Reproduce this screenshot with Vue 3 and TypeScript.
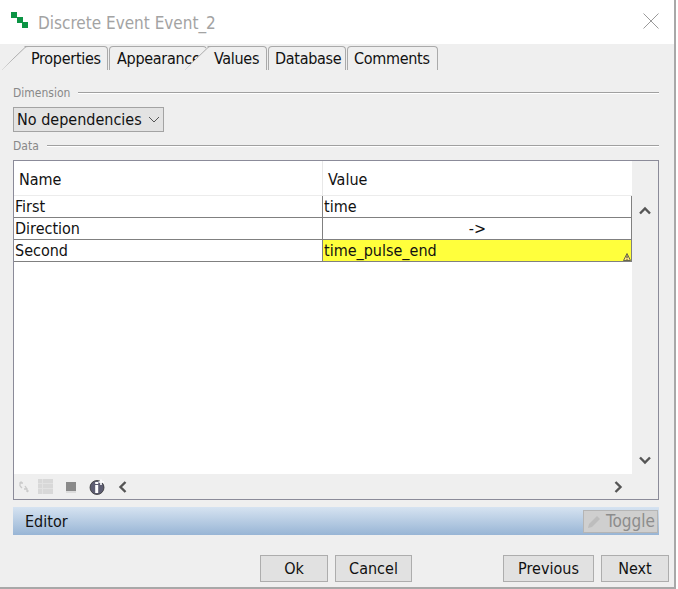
<template>
  <div class="dialog">
    <header class="titlebar">
      <svg class="logo" width="18" height="18" viewBox="0 0 18 18">
        <rect x="0" y="0" width="6" height="6" fill="#0b9444" />
        <rect x="6" y="5" width="6" height="6" fill="#0b9444" />
        <rect x="11" y="10" width="6" height="6" fill="#0b9444" />
      </svg>
      <span class="title">Discrete Event Event_2</span>
      <svg class="close" width="16" height="16" viewBox="0 0 16 16">
        <path d="M0.5 0.5L15.5 15.5M15.5 0.5L0.5 15.5" stroke="#9a9a9a" stroke-width="1" fill="none" />
      </svg>
    </header>

    <div class="body">
      <nav class="tabs">
        <div v-for="tab in tabs" :key="tab.label" class="tab" :class="{ slanted: tab.slanted }" :style="{ width: tab.width + 'px' }">
          <svg v-if="tab.slanted" class="slant" width="26" height="24" viewBox="0 0 26 24">
            <path d="M0 23.5L23 1.5Q24 .5 26 .5" stroke="#aaa" fill="none" />
          </svg>
          {{ tab.label }}
        </div>
      </nav>

      <div class="legend legend-first"><span>Dimension</span><i></i></div>
      <div class="select">
        <span>No dependencies</span>
        <svg width="12" height="7" viewBox="0 0 12 7">
          <path d="M1 1L6 6L11 1" stroke="#555" fill="none" />
        </svg>
      </div>

      <div class="legend legend-data"><span>Data</span><i></i></div>
      <section class="frame">
        <div class="frame-main">
          <div class="grid">
            <div class="head">
              <div class="head-cell">Name</div>
              <div class="head-cell">Value</div>
            </div>
            <div v-for="row in rows" :key="row.name" class="row">
              <div class="cell">{{ row.name }}</div>
              <div class="cell value" :class="{ center: row.center, warn: row.warn }">
                {{ row.value }}
                <svg v-if="row.warn" class="warn-icon" width="8" height="8" viewBox="0 0 8 8">
                  <path d="M4 .5L7.5 7.5H.5Z" fill="#ffe680" stroke="#444" stroke-width=".8" />
                  <path d="M4 2.5V5.2M4 6V6.8" stroke="#222" stroke-width=".9" />
                </svg>
              </div>
            </div>
          </div>
          <div class="vscroll">
            <svg width="12" height="9" viewBox="0 0 12 9"><path d="M1 7.5L6 2.5L11 7.5" stroke="#555" stroke-width="2.4" fill="none" /></svg>
            <svg width="12" height="9" viewBox="0 0 12 9"><path d="M1 1.5L6 6.5L11 1.5" stroke="#555" stroke-width="2.4" fill="none" /></svg>
          </div>
        </div>
        <div class="toolbar">
          <svg width="11" height="12" viewBox="0 0 11 12">
            <path d="M1 5V2H4M2.5 .5L1 2M8 11V8H5M9.5 9.5L8 11M1 5L3 7M8 8L6 5" stroke="#cacaca" stroke-width="1.3" fill="none" />
          </svg>
          <svg class="tool-table" width="15" height="15" viewBox="0 0 15 15">
            <rect width="15" height="15" fill="#d8d8d8" />
            <path d="M0 4.5H15M0 9.5H15M4.5 0V15" stroke="#e2e2e2" />
          </svg>
          <svg class="tool-square" width="10" height="11" viewBox="0 0 10 11">
            <rect width="10" height="9" fill="#8a8a8a" />
            <rect y="9" width="10" height="2" fill="#dcdcdc" />
          </svg>
          <svg class="tool-info" width="16" height="16" viewBox="0 0 16 16">
            <circle cx="8" cy="8.5" r="7" fill="#5d5d72" stroke="#333" stroke-width=".8" />
            <rect x="6.2" y="6" width="3" height="8" fill="#fff" />
            <rect x="6.2" y="3" width="3" height="2" fill="#fff" />
            <path d="M12 .5V6M9.5 3H15" stroke="#fff" stroke-width="1.6" />
          </svg>
          <svg class="tool-left" width="9" height="12" viewBox="0 0 9 12"><path d="M7.5 1L2.5 6L7.5 11" stroke="#555" stroke-width="2.4" fill="none" /></svg>
          <svg class="tool-right" width="9" height="12" viewBox="0 0 9 12"><path d="M1.5 1L6.5 6L1.5 11" stroke="#555" stroke-width="2.4" fill="none" /></svg>
        </div>
      </section>

      <div class="editor">
        <span>Editor</span>
        <div class="toggle">
          <svg width="15" height="15" viewBox="0 0 15 15">
            <path d="M1 14L2 10L10 2L13 5L5 13Z" fill="#bdbdbd" />
          </svg>
          Toggle
        </div>
      </div>

      <footer class="actions">
        <button class="btn ok">Ok</button>
        <button class="btn cancel">Cancel</button>
        <button class="btn previous">Previous</button>
        <button class="btn next">Next</button>
      </footer>
    </div>
  </div>
</template>

<script setup lang="ts">
interface Tab {
  label: string;
  width: number;
  slanted?: boolean;
}

interface Row {
  name: string;
  value: string;
  center?: boolean;
  warn?: boolean;
}

const tabs: Tab[] = [
  { label: "Properties", width: 106, slanted: true },
  { label: "Appearance", width: 98 },
  { label: "Values", width: 82, slanted: true },
  { label: "Database", width: 78 },
  { label: "Comments", width: 91 },
];

const rows: Row[] = [
  { name: "First", value: "time" },
  { name: "Direction", value: "->", center: true },
  { name: "Second", value: "time_pulse_end", warn: true },
];
</script>

<style scoped>
.dialog {
  width: 676px;
  height: 589px;
  box-sizing: border-box;
  border-right: 2px solid #a8a8a8;
  border-bottom: 2px solid #a8a8a8;
  background: #efefef;
  font-family: "DejaVu Sans Condensed", "DejaVu Sans", sans-serif;
  font-stretch: condensed;
  font-size: 16px;
  color: #111;
  display: flex;
  flex-direction: column;
  overflow: hidden;
}

.titlebar {
  height: 44px;
  flex: none;
  background: #fff;
  display: flex;
  align-items: center;
  padding: 0 14px 0 11px;
  box-sizing: border-box;
}

.logo {
  margin: -2px 9px 0 0;
}

.title {
  flex: 1;
  font-size: 17px;
  line-height: 22px;
  padding-top: 2px;
  color: #a3a3a3;
}

.close {
  margin-top: -2px;
  margin-right: 1px;
}

.body {
  flex: 1;
  display: flex;
  flex-direction: column;
  padding: 0 15px 0 13px;
  min-height: 0;
}

.tabs {
  display: flex;
  height: 24px;
  margin: 2px 0 0 -11px;
  flex: none;
}

.tab {
  position: relative;
  flex: none;
  box-sizing: border-box;
  border: 1px solid #aaa;
  border-bottom: 0;
  border-radius: 4px 4px 0 0;
  margin-right: 1px;
  padding-left: 6px;
  line-height: 24px;
  letter-spacing: -0.3px;
  white-space: nowrap;
}

.tab:nth-child(2) {
  padding-left: 7px;
}

.tab.slanted {
  border-left: 0;
  border-radius: 0 4px 0 0;
  padding-left: 29px;
  background: #efefef;
  clip-path: polygon(0 100%, 23px 0, 100% 0, 100% 100%);
}

.tab.slanted:nth-child(3) {
  margin-left: -23px;
}

.slant {
  position: absolute;
  left: 0;
  top: -1px;
}

.legend {
  display: flex;
  align-items: center;
  gap: 8px;
  font-size: 12px;
  font-stretch: normal;
  color: #888;
  height: 16px;
  flex: none;
  width: 646px;
}

.legend i {
  flex: 1;
  border-top: 1px solid #a0a0a0;
  border-bottom: 1px solid #fff;
}

.legend-first {
  margin-top: 15px;
}

.legend-data {
  margin-top: 6px;
}

.select {
  width: 151px;
  height: 25px;
  flex: none;
  box-sizing: border-box;
  margin-top: 6px;
  border: 1px solid #a3a3a3;
  background: #e3e3e3;
  display: flex;
  align-items: center;
  justify-content: space-between;
  padding: 0 3px;
}

.frame {
  margin-top: 6px;
  height: 340px;
  flex: none;
  width: 646px;
  box-sizing: border-box;
  border: 1px solid #8b8b99;
  display: flex;
  flex-direction: column;
}

.frame-main {
  flex: 1;
  display: flex;
  min-height: 0;
}

.grid {
  width: 618px;
  background: #fff;
  flex: none;
}

.head {
  display: grid;
  grid-template-columns: 308px 308px;
  height: 35px;
  border-bottom: 1px solid #ececec;
  box-sizing: border-box;
}

.head-cell {
  padding-left: 5px;
  line-height: 38px;
}

.head-cell + .head-cell {
  border-left: 1px solid #e8e8e8;
}

.row {
  display: grid;
  grid-template-columns: 308px 310px;
  height: 22px;
  box-sizing: border-box;
  border-bottom: 1px solid #808080;
}

.cell {
  padding-left: 1px;
  line-height: 21px;
  white-space: nowrap;
}

.value {
  position: relative;
  border-left: 1px solid #808080;
  border-right: 1px solid #808080;
  box-sizing: border-box;
}

.center {
  text-align: center;
}

.warn {
  background: #ffff3c;
}

.warn-icon {
  position: absolute;
  right: 0;
  bottom: 0;
}

.vscroll {
  flex: 1;
  display: flex;
  flex-direction: column;
  align-items: center;
  justify-content: space-between;
  padding: 45px 0 9px;
}

.toolbar {
  height: 25px;
  flex: none;
  display: flex;
  align-items: center;
  padding: 0 35px 0 5px;
}

.tool-table {
  margin-left: 8px;
}

.tool-square {
  margin: 2px 0 0 13px;
}

.tool-info {
  margin-left: 13px;
}

.tool-left {
  margin-left: 13px;
}

.tool-right {
  margin-left: auto;
}

.editor {
  margin-top: 7px;
  width: 646px;
  height: 28px;
  flex: none;
  box-sizing: border-box;
  background: linear-gradient(#d6e3f1, #98b5d5);
  display: flex;
  align-items: center;
  justify-content: space-between;
  padding: 0 1px 0 12px;
}

.toggle {
  width: 75px;
  height: 23px;
  box-sizing: border-box;
  border: 1px solid #b5b5b5;
  background: #cfcfcf;
  color: #8c8c8c;
  font-size: 17px;
  display: flex;
  align-items: center;
  gap: 4px;
  padding-left: 3px;
  white-space: nowrap;
}

.actions {
  margin-top: 20px;
  display: flex;
  height: 27px;
  flex: none;
  margin-left: 247px;
}

.btn {
  box-sizing: border-box;
  flex: none;
  height: 27px;
  border: 1px solid #adadad;
  background: #e1e1e1;
  font: inherit;
  color: #111;
  padding: 0;
}

.ok {
  width: 68px;
}

.cancel {
  width: 77px;
  margin-left: 7px;
}

.previous {
  width: 91px;
  margin-left: 91px;
}

.next {
  width: 68px;
  margin-left: 7px;
}
</style>
